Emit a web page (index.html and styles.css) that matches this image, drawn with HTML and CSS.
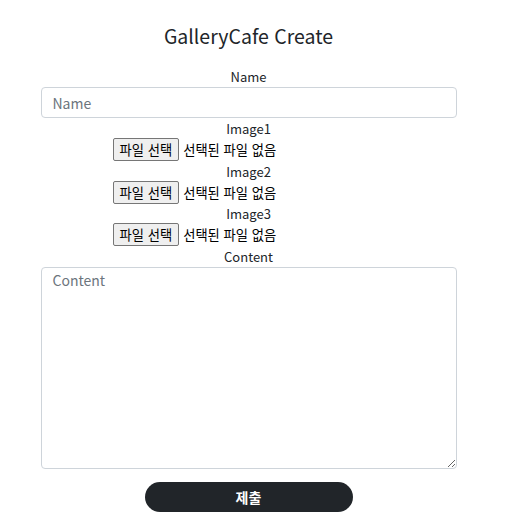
FILE: index.html
```html
<!DOCTYPE html>
<html lang="ko">
<head>
<meta charset="utf-8">
<title>GalleryCafe Create</title>
<link rel="stylesheet" href="styles.css">
</head>
<body>
<main class="page">
  <h1 class="title">GalleryCafe Create</h1>
  <form class="form">
    <label class="label">Name</label>
    <input class="field" type="text" placeholder="Name">
    <label class="label">Image1</label>
    <div class="file"><span class="file-btn">파일 선택</span><span class="file-text">선택된 파일 없음</span></div>
    <label class="label">Image2</label>
    <div class="file"><span class="file-btn">파일 선택</span><span class="file-text">선택된 파일 없음</span></div>
    <label class="label">Image3</label>
    <div class="file"><span class="file-btn">파일 선택</span><span class="file-text">선택된 파일 없음</span></div>
    <label class="label">Content</label>
    <textarea class="field area" placeholder="Content"></textarea>
    <button class="submit" type="button">제출</button>
  </form>
</main>
</body>
</html>
```
FILE: styles.css
```css
* { box-sizing: border-box; }
html, body { margin: 0; background: #fff; }
body {
  padding: 0 8px 0 0;
  font-family: "Noto Sans CJK KR", "Noto Sans", sans-serif;
  color: #212529;
  font-size: 13px;
}
.page {
  width: 416px;
  margin: 0 auto;
  display: flex;
  flex-direction: column;
  align-items: center;
}
.title {
  margin: 22px 0 0;
  font-size: 19.5px;
  font-weight: 400;
  line-height: 28px;
}
.form {
  width: 100%;
  margin-top: 16px;
  display: flex;
  flex-direction: column;
  align-items: center;
}
.label {
  display: block;
  line-height: 21px;
  height: 21px;
}
.field {
  width: 100%;
  height: 31px;
  border: 1px solid #ced4da;
  border-radius: 4px;
  padding: 0 11px;
  font-family: inherit;
  font-size: 14px;
  color: #212529;
  outline: none;
}
.field::placeholder { color: #6c757d; }
.area {
  height: 202px;
  padding: 2px 11px;
  resize: vertical;
  line-height: 20px;
}
.file {
  width: 272px;
  display: flex;
  align-items: center;
  height: 21.5px;
  gap: 4px;
  font-size: 13.3px;
  color: #000;
}
.file-btn {
  display: inline-flex;
  align-items: center;
  height: 23px;
  padding: 0 6px;
  background: #efefef;
  border: 1px solid #767676;
  border-radius: 2px;
}
.submit {
  margin-top: 13px;
  width: 208px;
  height: 30px;
  border: none;
  border-radius: 15px;
  background: #212529;
  color: #fff;
  font-family: inherit;
  font-weight: 700;
  font-size: 14px;
}
```
